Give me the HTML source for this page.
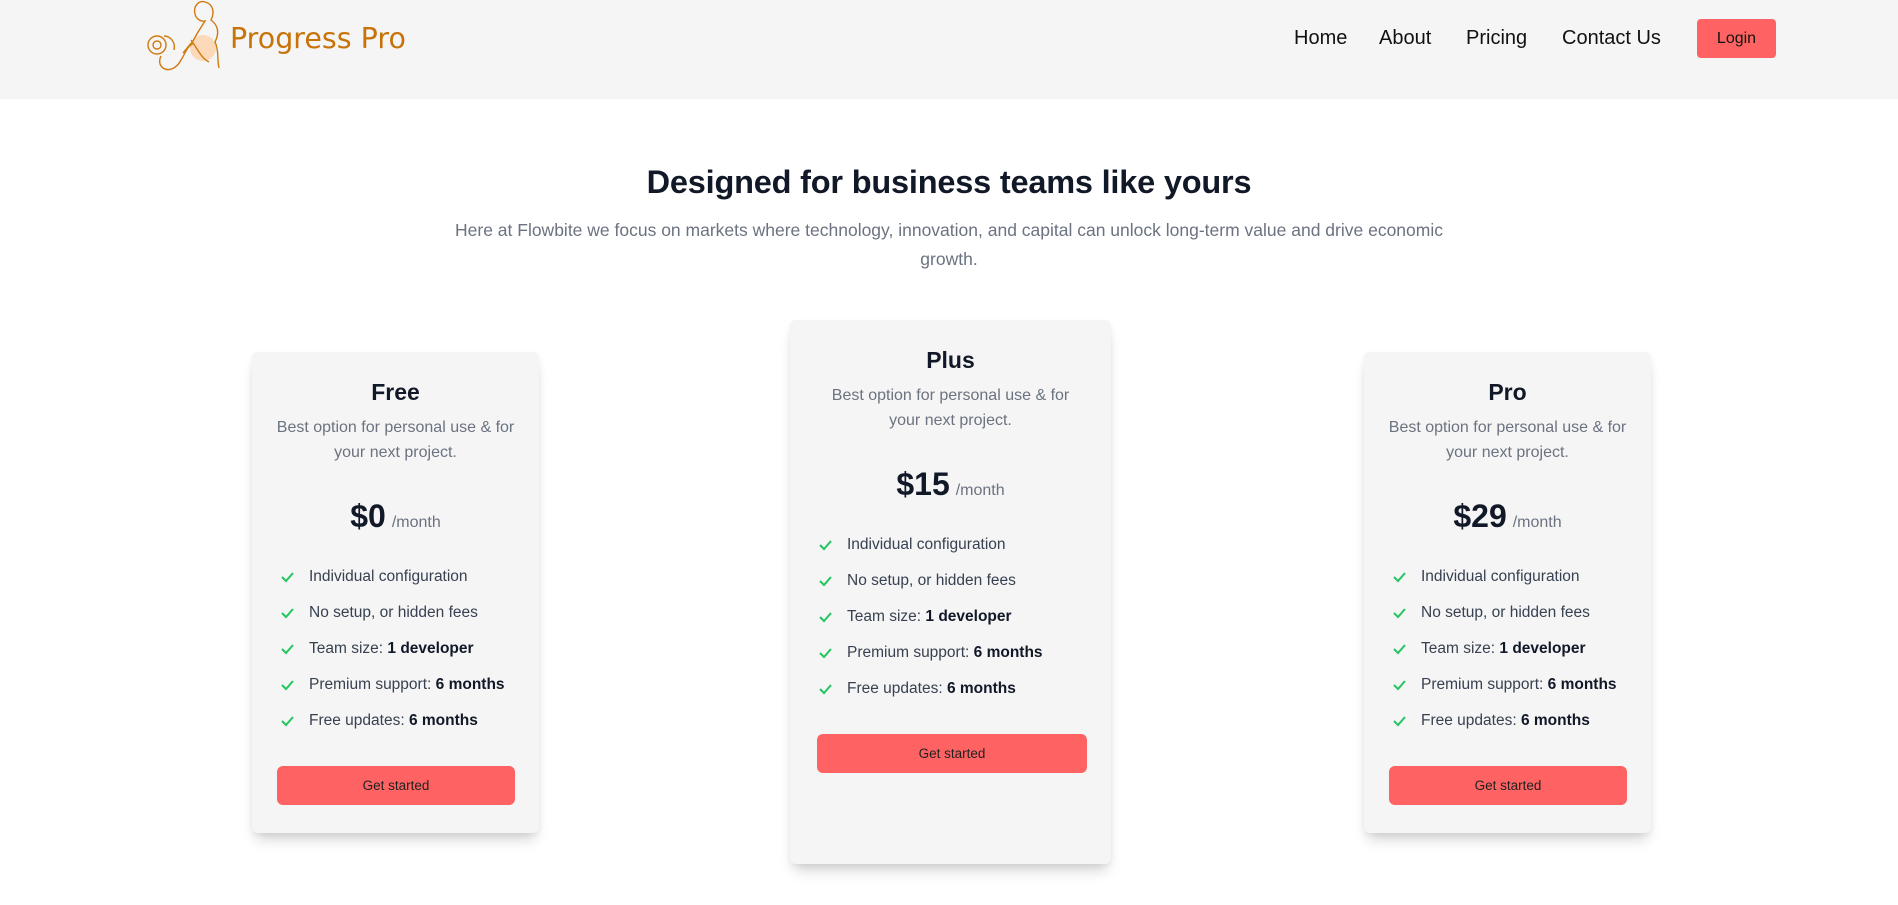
<!DOCTYPE html>
<html><head><meta charset="utf-8"><style>
*{margin:0;padding:0;box-sizing:border-box}
body{width:1898px;height:905px;background:#fff;font-family:"Liberation Sans",Arial,sans-serif;position:relative;overflow:hidden}
.hdr{position:absolute;left:0;top:0;width:1898px;height:99px;background:#f5f5f5}
.nav{position:absolute;top:27px;font-size:20px;color:#111;font-family:"Comic Sans MS","Liberation Sans",sans-serif}
.login{position:absolute;left:1697px;top:19px;width:79px;height:39px;background:#ff6262;border-radius:4px;font-size:16px;color:#111;text-align:center;line-height:39px}
h1{position:absolute;left:0;width:1898px;top:164px;text-align:center;font-size:32.5px;font-weight:800;color:#111827;letter-spacing:-0.2px}
.sub{position:absolute;left:429px;width:1040px;top:216px;text-align:center;font-size:17.5px;line-height:29px;color:#6b7280}
.card{position:absolute;background:#f5f5f5;border-radius:6px;box-shadow:0 10px 14px -4px rgba(0,0,0,.18),0 2px 6px rgba(0,0,0,.05)}
.card .t{position:absolute;left:0;right:0;top:26px;text-align:center;font-size:23px;font-weight:700;color:#111827;line-height:28px}
.card .d{position:absolute;left:20px;right:20px;top:63px;text-align:center;font-size:16px;color:#6b7280;line-height:25px}
.card .p{position:absolute;left:0;right:0;top:144px;text-align:center;color:#111827;line-height:40px}
.card .p b{font-size:32px;font-weight:800}
.card .p span{font-size:16px;color:#6b7280;margin-left:6px}
.card ul{position:absolute;top:207px;list-style:none}
.card li{height:36px;line-height:36px;font-size:15.5px;color:#374151;position:relative;padding-left:29px;white-space:nowrap}
.card li b{color:#111827}
.card li svg{position:absolute;left:0;top:11px}
.card .btn{position:absolute;background:#ff6262;border-radius:6px;height:39px;line-height:39px;text-align:center;font-size:13.5px;color:#222}
</style></head><body>
<div class="hdr">
<svg style="position:absolute;left:143px;top:0" width="88" height="80" viewBox="0 0 88 80" fill="none" stroke="#d07a12" stroke-width="1.4">
<circle cx="60" cy="48" r="13" fill="#fcd9b8" stroke="none"/>
<path d="M62 2c-6-2-12 4-10 12 1 5 6 8 10 7-3 5-8 12-12 20l-10 12"/>
<path d="M62 2c8 2 10 10 6 18 8 6 8 14 4 22 4 8 2 18 4 26"/>
<path d="M50 44c-6 2-8 10-12 16-4 8-12 12-18 8-4-3-4-8-2-12"/>
<circle cx="14" cy="45" r="9"/><circle cx="14" cy="45" r="4"/>
<path d="M21 36c6 0 12 6 10 14"/>
<path d="M48 40c6 8 10 18 18 22"/>
</svg>
<div style="position:absolute;left:230px;top:22px;font-size:28.5px;color:#c8730a;font-family:'Comic Sans MS','DejaVu Sans',sans-serif">Progress Pro</div>
<div class="nav" style="left:1294px">Home</div>
<div class="nav" style="left:1379px">About</div>
<div class="nav" style="left:1466px">Pricing</div>
<div class="nav" style="left:1562px">Contact Us</div>
<div class="login">Login</div>
</div>
<h1>Designed for business teams like yours</h1>
<div class="sub">Here at Flowbite we focus on markets where technology, innovation, and capital can unlock long-term value and drive economic growth.</div>

<div class="card" style="left:252px;top:352px;width:287px;height:481px">
<div class="t">Free</div><div class="d">Best option for personal use &amp; for your next project.</div>
<div class="p"><b>$0</b><span>/month</span></div>
<ul style="left:28px">
<li><svg width="15" height="14" viewBox="0 0 15 14"><path d="M2 7l4 4 7-8" stroke="#22c55e" stroke-width="2" fill="none"/></svg>Individual configuration</li>
<li><svg width="15" height="14" viewBox="0 0 15 14"><path d="M2 7l4 4 7-8" stroke="#22c55e" stroke-width="2" fill="none"/></svg>No setup, or hidden fees</li>
<li><svg width="15" height="14" viewBox="0 0 15 14"><path d="M2 7l4 4 7-8" stroke="#22c55e" stroke-width="2" fill="none"/></svg>Team size: <b>1 developer</b></li>
<li><svg width="15" height="14" viewBox="0 0 15 14"><path d="M2 7l4 4 7-8" stroke="#22c55e" stroke-width="2" fill="none"/></svg>Premium support: <b>6 months</b></li>
<li><svg width="15" height="14" viewBox="0 0 15 14"><path d="M2 7l4 4 7-8" stroke="#22c55e" stroke-width="2" fill="none"/></svg>Free updates: <b>6 months</b></li>
</ul>
<div class="btn" style="left:25px;top:414px;width:238px">Get started</div>
</div>

<div class="card" style="left:790px;top:320px;width:321px;height:544px">
<div class="t">Plus</div><div class="d" style="left:35px;right:35px">Best option for personal use &amp; for your next project.</div>
<div class="p"><b>$15</b><span>/month</span></div>
<ul style="left:28px">
<li><svg width="15" height="14" viewBox="0 0 15 14"><path d="M2 7l4 4 7-8" stroke="#22c55e" stroke-width="2" fill="none"/></svg>Individual configuration</li>
<li><svg width="15" height="14" viewBox="0 0 15 14"><path d="M2 7l4 4 7-8" stroke="#22c55e" stroke-width="2" fill="none"/></svg>No setup, or hidden fees</li>
<li><svg width="15" height="14" viewBox="0 0 15 14"><path d="M2 7l4 4 7-8" stroke="#22c55e" stroke-width="2" fill="none"/></svg>Team size: <b>1 developer</b></li>
<li><svg width="15" height="14" viewBox="0 0 15 14"><path d="M2 7l4 4 7-8" stroke="#22c55e" stroke-width="2" fill="none"/></svg>Premium support: <b>6 months</b></li>
<li><svg width="15" height="14" viewBox="0 0 15 14"><path d="M2 7l4 4 7-8" stroke="#22c55e" stroke-width="2" fill="none"/></svg>Free updates: <b>6 months</b></li>
</ul>
<div class="btn" style="left:27px;top:414px;width:270px">Get started</div>
</div>

<div class="card" style="left:1364px;top:352px;width:287px;height:481px">
<div class="t">Pro</div><div class="d">Best option for personal use &amp; for your next project.</div>
<div class="p"><b>$29</b><span>/month</span></div>
<ul style="left:28px">
<li><svg width="15" height="14" viewBox="0 0 15 14"><path d="M2 7l4 4 7-8" stroke="#22c55e" stroke-width="2" fill="none"/></svg>Individual configuration</li>
<li><svg width="15" height="14" viewBox="0 0 15 14"><path d="M2 7l4 4 7-8" stroke="#22c55e" stroke-width="2" fill="none"/></svg>No setup, or hidden fees</li>
<li><svg width="15" height="14" viewBox="0 0 15 14"><path d="M2 7l4 4 7-8" stroke="#22c55e" stroke-width="2" fill="none"/></svg>Team size: <b>1 developer</b></li>
<li><svg width="15" height="14" viewBox="0 0 15 14"><path d="M2 7l4 4 7-8" stroke="#22c55e" stroke-width="2" fill="none"/></svg>Premium support: <b>6 months</b></li>
<li><svg width="15" height="14" viewBox="0 0 15 14"><path d="M2 7l4 4 7-8" stroke="#22c55e" stroke-width="2" fill="none"/></svg>Free updates: <b>6 months</b></li>
</ul>
<div class="btn" style="left:25px;top:414px;width:238px">Get started</div>
</div>
</body></html>
